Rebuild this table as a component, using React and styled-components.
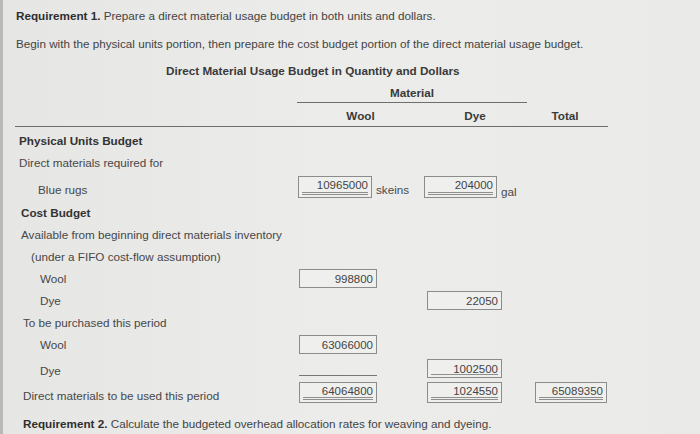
import React from "react";
import styled, { createGlobalStyle } from "styled-components";

const Global = createGlobalStyle`
  html, body { margin: 0; padding: 0; background: #e9e9e7; }
  body { font-family: "Liberation Sans", Arial, sans-serif; color: #3c3c3c; }
`;

const Page = styled.div`
  width: 700px;
  height: 434px;
  box-sizing: border-box;
  border-left: 3px solid #b9b9b7;
  background: linear-gradient(90deg, #e6e6e4 0%, #ececea 50%, #eaeae8 100%);
  padding: 4px 0 0 12px;
  display: flex;
  flex-direction: column;
  font-size: 11.7px;
  overflow: hidden;
`;

const Line = styled.div`
  height: ${(p) => p.$h}px;
  flex-shrink: 0;
  display: flex;
  align-items: center;
  padding-left: ${(p) => p.$indent || 0}px;
  color: #444;
`;

const B = styled.b`
  color: #2e2e2e;
`;

const Title = styled.div`
  height: 22px;
  flex-shrink: 0;
  display: flex;
  align-items: center;
  padding-left: 151px;
  font-weight: 700;
  color: #3a3a3a;
`;

const Grid = styled.div`
  display: grid;
  grid-template-columns: 282px 127px 108px 76px;
  width: 593px;
  flex-shrink: 0;
  height: ${(p) => p.$h}px;
  align-items: center;
  border-bottom: ${(p) => (p.$rule ? "1.5px solid #6e6e6e" : "none")};
  box-sizing: border-box;
`;

const MaterialHead = styled.div`
  grid-column: 2 / 4;
  width: 230px;
  height: 100%;
  box-sizing: border-box;
  border-bottom: 1.5px solid #6e6e6e;
  display: flex;
  align-items: flex-end;
  justify-content: center;
  padding-bottom: 3px;
  font-weight: 700;
  color: #3a3a3a;
`;

const ColHead = styled.div`
  text-align: center;
  font-weight: 700;
  color: #3a3a3a;
  padding-top: 2px;
  transform: translateX(${(p) => p.$dx || 0}px);
`;

const Label = styled.div`
  padding-left: ${(p) => p.$indent || 0}px;
  font-weight: ${(p) => (p.$bold ? 700 : 400)};
  color: ${(p) => (p.$bold ? "#333" : "#474747")};
  padding-top: ${(p) => p.$pt || 0}px;
`;

const Cell = styled.div`
  display: flex;
  align-items: center;
  gap: 4px;
  padding-left: ${(p) => p.$ml || 0}px;
  padding-top: ${(p) => p.$pt || 0}px;
  height: 100%;
  box-sizing: border-box;
`;

const Box = styled.div`
  position: relative;
  width: ${(p) => p.$w}px;
  height: ${(p) => p.$h || 19}px;
  box-sizing: border-box;
  border: 1px solid #8c8c8c;
  background: #efefed;
  font-size: 11.5px;
  color: #444;
  text-align: right;
  padding: ${(p) => (p.$double ? "1px 3px 0 0" : "2px 3px 0 0")};
  line-height: 14px;
`;

const Under = styled.span`
  position: absolute;
  left: 3px;
  right: 3px;
  bottom: ${(p) => p.$b}px;
  height: 1px;
  background: #8f8f8f;
`;

const Unit = styled.span`
  color: #4a4a4a;
  padding-top: ${(p) => p.$pt || 0}px;
`;

const Rule = styled.div`
  width: 78px;
  margin-left: 2px;
  border-bottom: 1.5px solid #777;
  align-self: flex-end;
  margin-bottom: 4px;
`;

function Input({ value, w, h, double, single }) {
  return (
    <Box $w={w} $h={h} $double={double}>
      {value}
      {double && (
        <>
          <Under $b={4} />
          <Under $b={2} />
        </>
      )}
      {single && <Under $b={2} />}
    </Box>
  );
}

export default function App() {
  return (
    <>
      <Global />
      <Page>
        <Line $h={22} $indent={1}>
          <span>
            <B>Requirement 1.</B> Prepare a direct material usage budget in both units and dollars.
          </span>
        </Line>
        <Line $h={6} />
        <Line $h={22} $indent={1}>
          Begin with the physical units portion, then prepare the cost budget portion of the direct material usage budget.
        </Line>
        <Line $h={5} />
        <Title>Direct Material Usage Budget in Quantity and Dollars</Title>
        <Grid $h={22}>
          <div />
          <MaterialHead>Material</MaterialHead>
        </Grid>
        <Grid $h={24} $rule>
          <div />
          <ColHead>Wool</ColHead>
          <ColHead $dx={-3}>Dye</ColHead>
          <ColHead $dx={-5}>Total</ColHead>
        </Grid>
        <Grid $h={24}>
          <Label $bold $indent={4} $pt={3}>Physical Units Budget</Label>
        </Grid>
        <Grid $h={22}>
          <Label $indent={4}>Direct materials required for</Label>
        </Grid>
        <Grid $h={28}>
          <Label $indent={23} $pt={5}>Blue rugs</Label>
          <Cell $ml={1}>
            <Input value="10965000" w={74} h={22} double />
            <Unit $pt={4}>skeins</Unit>
          </Cell>
          <Cell>
            <Input value="204000" w={73} h={22} double />
            <Unit $pt={8}>gal</Unit>
          </Cell>
        </Grid>
        <Grid $h={22}>
          <Label $bold $indent={6}>Cost Budget</Label>
        </Grid>
        <Grid $h={22}>
          <Label $indent={6}>Available from beginning direct materials inventory</Label>
        </Grid>
        <Grid $h={22}>
          <Label $indent={16}>(under a FIFO cost-flow assumption)</Label>
        </Grid>
        <Grid $h={22}>
          <Label $indent={25}>Wool</Label>
          <Cell $ml={2}>
            <Input value="998800" w={78} />
          </Cell>
        </Grid>
        <Grid $h={22}>
          <Label $indent={25}>Dye</Label>
          <div />
          <Cell $ml={3}>
            <Input value="22050" w={75} />
          </Cell>
        </Grid>
        <Grid $h={22}>
          <Label $indent={8}>To be purchased this period</Label>
        </Grid>
        <Grid $h={22}>
          <Label $indent={25}>Wool</Label>
          <Cell $ml={2}>
            <Input value="63066000" w={78} />
          </Cell>
        </Grid>
        <Grid $h={25}>
          <Label $indent={25} $pt={6}>Dye</Label>
          <Cell>
            <Rule />
          </Cell>
          <Cell $ml={3} $pt={1}>
            <Input value="1002500" w={75} single />
          </Cell>
        </Grid>
        <Grid $h={25}>
          <Label $indent={8} $pt={6}>Direct materials to be used this period</Label>
          <Cell $ml={2}>
            <Input value="64064800" w={78} h={21} double />
          </Cell>
          <Cell $ml={3}>
            <Input value="1024550" w={75} h={21} double />
          </Cell>
          <Cell $ml={3}>
            <Input value="65089350" w={72} h={21} double />
          </Cell>
        </Grid>
        <Line $h={7} />
        <Line $h={22} $indent={8}>
          <span>
            <B>Requirement 2.</B> Calculate the budgeted overhead allocation rates for weaving and dyeing.
          </span>
        </Line>
      </Page>
    </>
  );
}
